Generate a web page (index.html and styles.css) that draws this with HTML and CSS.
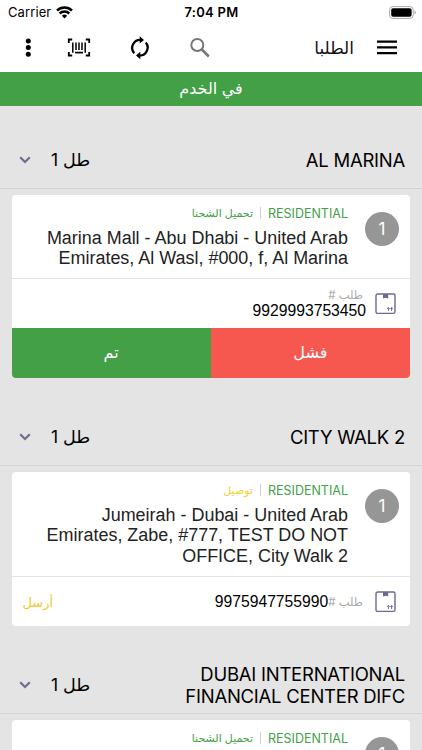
FILE: index.html
```html
<!DOCTYPE html>
<html lang="ar" dir="rtl">
<head>
<meta charset="utf-8">
<title>الطلبا</title>
<link rel="stylesheet" href="styles.css">
</head>
<body>
<svg width="0" height="0" class="defs">
  <symbol id="parcel" viewBox="0 0 22 22"><rect x="1" y="1" width="19" height="19.4" rx="1.7" fill="none" stroke="#6c6a92" stroke-width="1.4"/><path d="M8 1h5.2v4.6L10.6 4.8 8 5.6z" fill="#6c6a92"/><path d="M13.4 18v-3.3M16.6 18v-3.3M12.1 15.7l1.3-1.2 1.3 1.2M15.3 15.7l1.3-1.2 1.3 1.2" fill="none" stroke="#6c6a92" stroke-width="1"/></symbol>
  <symbol id="chevron" viewBox="0 0 12 8"><path d="M1.2 1.3 6 6l4.8-4.7" fill="none" stroke="#6d7090" stroke-width="2.3"/></symbol>
</svg>
<div class="status" dir="ltr">
  <div class="carrier"><span>Carrier</span><svg width="17" height="13" viewBox="0 0 17 13" fill="none" stroke="#000" stroke-width="2.5"><path d="M1 4.5a10.7 10.7 0 0 1 15 0M3.7 7.5a6.8 6.8 0 0 1 9.6 0"/><path d="M8.5 12.4 5.9 9.7a3.8 3.8 0 0 1 5.2 0z" fill="#000" stroke="none"/></svg></div>
  <span class="time">7:04 PM</span>
  <svg class="battery" width="28" height="13" viewBox="0 0 28 13"><rect x=".6" y=".6" width="23.6" height="11.8" rx="3.2" fill="none" stroke="#aaa"/><rect x="2.2" y="2.2" width="20.4" height="8.6" rx="1.8"/><path d="M25.5 4.6a2 2 0 0 1 0 3.8z" fill="#aaa"/></svg>
</div>
<div class="toolbar" dir="ltr">
  <svg class="more" width="6" height="20" viewBox="0 0 6 20"><circle cx="3.3" cy="3" r="2.5"/><circle cx="3.3" cy="9.6" r="2.5"/><circle cx="3.3" cy="16.3" r="2.5"/></svg>
  <svg class="scan" width="24" height="20" viewBox="0 0 24 20" fill="none" stroke="#000"><path d="M1.8 5V1.5h3.4M18.8 1.5h3.4V5M1.8 14v3.5h3.4M18.8 17.5h3.4V14" stroke-width="1.8"/><path d="M5.8 4.5v10.2M9 4.5v7.6M12 4.5v7.6M15 4.5v7.6M18.2 4.5v10.2" stroke-width="1.5"/><path d="M8 14.6h8" stroke-width="1.7"/></svg>
  <svg class="sync" width="20" height="24" viewBox="0 0 20 24" fill="none" stroke="#000" stroke-width="2.3"><path d="M4.2 17.2A8 8 0 0 1 10.5 3.9M15.8 6.4A8 8 0 0 1 9.5 19.5"/><path d="M9.7.2 14 3.9 9.7 7.6zM10.3 15.8 6 19.5l4.3 3.7z" fill="#000" stroke="none"/></svg>
  <svg class="search" width="20" height="20" viewBox="0 0 20 20" fill="none" stroke="#777" stroke-width="2"><circle cx="7.3" cy="7" r="6"/><path d="m11.8 11.5 7 7" stroke-width="2.5"/></svg>
  <h1>الطلبا</h1>
  <svg class="menu" width="20" height="16" viewBox="0 0 20 16"><path d="M0 1.6h20M0 7.4h20M0 13.2h20" stroke="#000" stroke-width="2.2"/></svg>
</div>
<div class="banner">في الخدم</div>
<main>
  <section>
    <header><h2 dir="ltr">AL MARINA</h2><span class="count">طل 1</span><svg class="chev"><use href="#chevron"/></svg></header>
    <article class="card">
      <div class="place">
        <span class="num">1</span>
        <div class="info">
          <div class="tags"><span class="kind">RESIDENTIAL</span><i></i><span class="job">تحميل الشحنا</span></div>
          <p class="address" dir="ltr">Marina Mall - Abu Dhabi - United Arab<br>Emirates, Al Wasl, #000, f, Al Marina</p>
        </div>
      </div>
      <div class="order">
        <svg class="box"><use href="#parcel"/></svg>
        <div class="stack"><span class="label">طلب #</span><span class="code">9929993753450</span></div>
      </div>
      <div class="actions"><div class="fail">فشل</div><div class="done">تم</div></div>
    </article>
  </section>
  <section>
    <header><h2 dir="ltr">CITY WALK 2</h2><span class="count">طل 1</span><svg class="chev"><use href="#chevron"/></svg></header>
    <article class="card">
      <div class="place tall">
        <span class="num">1</span>
        <div class="info">
          <div class="tags"><span class="kind">RESIDENTIAL</span><i></i><span class="job deliver">توصيل</span></div>
          <p class="address" dir="ltr">Jumeirah - Dubai - United Arab<br>Emirates, Zabe, #777, TEST DO NOT<br>OFFICE, City Walk 2</p>
        </div>
      </div>
      <div class="order">
        <svg class="box"><use href="#parcel"/></svg>
        <div class="inline"><span class="label">طلب #</span><span class="code">9975947755990</span></div>
        <span class="send">أرسل</span>
      </div>
    </article>
  </section>
  <section>
    <header><h2 dir="ltr">DUBAI INTERNATIONAL<br>FINANCIAL CENTER DIFC</h2><span class="count">طل 1</span><svg class="chev"><use href="#chevron"/></svg></header>
    <article class="card">
      <div class="place">
        <span class="num">1</span>
        <div class="info">
          <div class="tags"><span class="kind">RESIDENTIAL</span><i></i><span class="job">تحميل الشحنا</span></div>
        </div>
      </div>
    </article>
  </section>
</main>
</body>
</html>
```
FILE: styles.css
```css
* { box-sizing: border-box; }
html, body { height: 750px; overflow: hidden; }
body { margin: 0; background: #e4e4e4; color: #111; font-family: Inter, "DejaVu Sans", sans-serif; }
h1, h2, p { margin: 0; font-weight: 400; }
svg { display: block; flex: none; }
.defs { position: absolute; }

.status { height: 24px; background: #fff; display: grid; grid-template-columns: 1fr auto 1fr; align-items: center; padding: 0 5px 0 8px; font-size: 13px; color: #000; }
.carrier { display: flex; gap: 5px; align-items: center; letter-spacing: .1px; }
.time { font-weight: 600; letter-spacing: .3px; margin-right: 2px; }
.battery { justify-self: end; }

.toolbar { height: 48px; background: #fff; display: flex; align-items: center; padding: 0 25px; }
.scan { margin-left: 36px; }
.sync { margin-left: 39px; }
.search { margin-left: 40px; }
.toolbar h1 { margin-left: auto; font-size: 17px; line-height: 24px; }
.menu { margin-left: 23px; }

.banner { height: 34px; background: #43a047; color: #fff; text-align: center; font-size: 16px; line-height: 33px; }

main { height: 644px; padding-top: 26px; overflow: hidden; }
section { margin-bottom: 31px; }
header { height: 57px; border-bottom: 1px solid #d3d3d3; display: flex; align-items: center; padding: 0 17px 0 19px; }
h2 { font-size: 18.5px; line-height: 22.5px; letter-spacing: -.25px; text-align: right; color: #000; white-space: nowrap; }
.count { margin-right: auto; font-size: 17.5px; line-height: 24px; letter-spacing: -.3px; color: #000; white-space: nowrap; }
.chev { width: 12px; height: 8px; margin-right: 20px; }

.card { margin: 6px 12px 0 11.5px; background: #fff; border-radius: 4px; overflow: hidden; }
.place { height: 84px; border-bottom: 1px solid #e4e4e4; display: flex; padding: 10px 11px 0 0; }
.tall { height: 105px; }
.num { width: 34px; height: 34px; margin-top: 7px; border-radius: 50%; background: #969696; color: #fff; font-size: 17px; line-height: 34px; text-align: center; flex: none; }
.info { flex: 1; padding-right: 17px; }
.tags { height: 16px; display: flex; align-items: center; font-size: 12.5px; color: #43a047; white-space: nowrap; }
.tags i { width: 1px; height: 12px; background: #ccc; margin: 0 7px; }
.kind { font-size: 12.5px; }
.job { font-size: 11px; line-height: 16px; }
.deliver { color: #f5cf32; }
.address { margin-top: 7px; font: 17.95px/20.3px "Liberation Sans", sans-serif; text-align: right; color: #222; white-space: nowrap; }

.order { height: 49px; display: flex; align-items: center; padding: 0 13px 0 11px; }
.box { width: 22px; height: 22px; }
.stack { display: flex; flex-direction: column; align-items: flex-start; margin: -2px 9px 0 0; }
.label { font-size: 11.5px; line-height: 16px; color: #aaa; padding-right: 3px; }
.code { font: 15.7px/16px "Liberation Sans", sans-serif; color: #000; }
.inline { display: flex; align-items: center; margin-right: 9px; }
.send { margin-right: auto; font-size: 13px; color: #f0c92c; }

.actions { height: 50px; display: flex; color: #fff; font-size: 16px; line-height: 49px; text-align: center; }
.fail, .done { flex: 1; }
.fail { background: #f6574f; }
.done { background: #43a047; }
```
